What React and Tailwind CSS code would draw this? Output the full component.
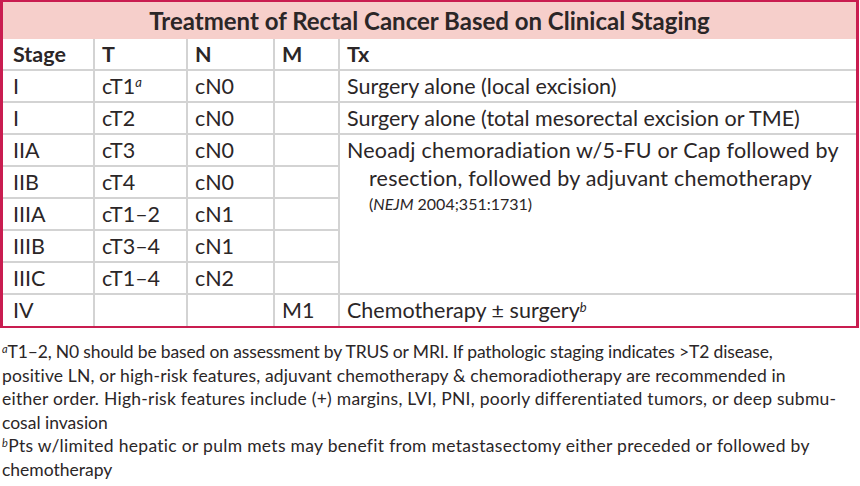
export default function App() {
  const cell = "border-2 border-[#d3d3d3] px-[7px] align-middle";
  const rows = [
    { stage: "I", t: "cT1", sup: "a", n: "cN0", m: "", tx: "Surgery alone (local excision)" },
    { stage: "I", t: "cT2", n: "cN0", m: "", tx: "Surgery alone (total mesorectal excision or TME)" },
    { stage: "IIA", t: "cT3", n: "cN0", m: "", merged: true },
    { stage: "IIB", t: "cT4", n: "cN0", m: "" },
    { stage: "IIIA", t: "cT1–2", n: "cN1", m: "" },
    { stage: "IIIB", t: "cT3–4", n: "cN1", m: "" },
    { stage: "IIIC", t: "cT1–4", n: "cN2", m: "" },
  ];

  return (
    <div className="w-[860px] h-[486px] bg-white text-[#2b2627] font-['Lato','Liberation_Sans',sans-serif] overflow-hidden">
      <div className="w-[859px] border-[#c91d50] border-t-2 border-b-2 border-l-[3px] border-r-[3px]">
        <div className="h-[37px] bg-[#f6cfcb] flex items-center justify-center font-bold text-[24px]">
          Treatment of Rectal Cancer Based on Clinical Staging
        </div>
        <table className="w-full table-fixed border-collapse text-[21.5px] leading-tight">
          <colgroup>
            <col className="w-[91px]" />
            <col className="w-[93px]" />
            <col className="w-[87px]" />
            <col className="w-[65px]" />
            <col />
          </colgroup>
          <tbody>
            <tr className="h-[31px] font-bold">
              <td className={`${cell} border-t-0 border-l-0 pl-[10px]`}>Stage</td>
              <td className={`${cell} border-t-0`}>T</td>
              <td className={`${cell} border-t-0`}>N</td>
              <td className={`${cell} border-t-0`}>M</td>
              <td className={`${cell} border-t-0 border-r-0`}>Tx</td>
            </tr>
            {rows.map((r, i) => (
              <tr key={i} className="h-[32px]">
                <td className={`${cell} border-l-0 pl-[10px]`}>{r.stage}</td>
                <td className={cell}>
                  {r.t}
                  {r.sup && <sup className="italic text-[13px]">{r.sup}</sup>}
                </td>
                <td className={cell}>{r.n}</td>
                <td className={cell}>{r.m}</td>
                {r.tx && <td className={`${cell} border-r-0 whitespace-nowrap`}>{r.tx}</td>}
                {r.merged && (
                  <td rowSpan={5} className={`${cell} border-r-0 align-top pt-[1px]`}>
                    <div className="pl-[22px] -indent-[22px] leading-[28px] tracking-[0.2px]">
                      Neoadj chemoradiation w/5-FU or Cap followed by resection, followed by adjuvant chemotherapy
                    </div>
                    <div className="pl-[22px] text-[16px] leading-[24px]">
                      (<span className="italic">NEJM</span> 2004;351:1731)
                    </div>
                  </td>
                )}
              </tr>
            ))}
            <tr className="h-[32px]">
              <td className={`${cell} border-l-0 border-b-0 pl-[10px]`}>IV</td>
              <td className={`${cell} border-b-0`}></td>
              <td className={`${cell} border-b-0`}></td>
              <td className={`${cell} border-b-0`}>M1</td>
              <td className={`${cell} border-b-0 border-r-0`}>
                Chemotherapy ± surgery<sup className="italic text-[13px]">b</sup>
              </td>
            </tr>
          </tbody>
        </table>
      </div>
      <div className="pl-[2px] pt-[12px] text-[17.5px] leading-[23.5px] whitespace-nowrap">
        <div className="tracking-[-0.15px]">
          <sup className="italic text-[11px]">a</sup>T1–2, N0 should be based on assessment by TRUS or MRI. If pathologic staging indicates &gt;T2 disease,
        </div>
        <div className="tracking-[0.15px]">positive LN, or high-risk features, adjuvant chemotherapy &amp; chemoradiotherapy are recommended in</div>
        <div className="tracking-[0.25px]">either order. High-risk features include (+) margins, LVI, PNI, poorly differentiated tumors, or deep submu-</div>
        <div>cosal invasion</div>
        <div className="tracking-[0.3px]">
          <sup className="italic text-[11px]">b</sup>Pts w/limited hepatic or pulm mets may benefit from metastasectomy either preceded or followed by
        </div>
        <div>chemotherapy</div>
      </div>
    </div>
  );
}
